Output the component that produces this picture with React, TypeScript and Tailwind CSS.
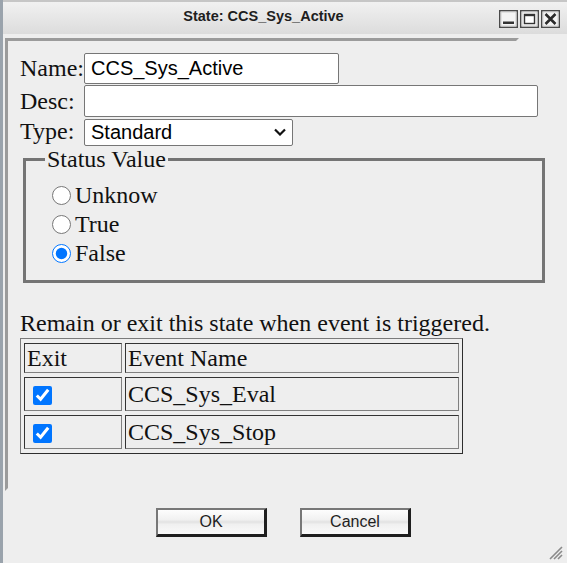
import React from 'react';

const TitleButton = ({ kind }: { kind: 'min' | 'max' | 'close' }) => (
    <svg width="19" height="18" viewBox="0 0 19 18">
        <rect x="0.75" y="0.75" width="17.5" height="16.5" fill="#f4f4f4" stroke="#4a4a4a" strokeWidth="1.5" />
        <rect x="2" y="2" width="15" height="14" fill="none" stroke="#cfcfcf" strokeWidth="1" />
        {kind === 'min' && <rect x="4" y="11.5" width="11" height="2.5" fill="#333" />}
        {kind === 'max' && (
            <>
                <rect x="4.5" y="4.5" width="10" height="9" fill="#fff" stroke="#333" strokeWidth="1.4" />
                <rect x="4" y="4" width="11" height="2.2" fill="#333" />
            </>
        )}
        {kind === 'close' && (
            <path d="M4.5 4 L14.5 14 M14.5 4 L4.5 14" stroke="#2b2b2b" strokeWidth="2.6" />
        )}
    </svg>
);

const cell =
    "border border-t-[#333333] border-l-[#333333] border-r-[#808080] border-b-[#808080] px-[2px] py-0 text-left font-normal";

export default function App() {
    return (
        <div className="flex h-[563px] w-[567px] bg-[#eeeeee] text-[#111]">
            <div className="w-[3px] shrink-0 bg-[#9aa3ac]" />
            <div className="relative flex flex-1 flex-col">
                {/* title bar */}
                <div className="flex h-[34px] shrink-0 border-t-2 border-[#c6c6c6] bg-linear-to-b from-[#f1f1f1] to-[#dcdcdc]">
                    <div className="flex flex-1 justify-center pl-[25px] pt-[6px] font-['Liberation_Sans',sans-serif] text-[14.5px] leading-[17px] font-bold text-[#1e1e1e]">
                        State: CCS_Sys_Active
                    </div>
                    <div className="flex gap-[2px] pt-[8px] pr-[7px]">
                        <TitleButton kind="min" />
                        <TitleButton kind="max" />
                        <TitleButton kind="close" />
                    </div>
                </div>

                {/* main panel */}
                <div className="ml-[2px] mt-[4px] h-[453px] w-[514px] border-[3px] border-t-[#9b9b9b] border-l-[#9b9b9b] border-r-[#eeeeee] border-b-[#eeeeee] pl-[12px] pt-[12px] font-['Liberation_Serif',serif] text-[24px] leading-[27px]">
                    <div className="flex h-[31px] items-center">
                        <span className="w-[64px] shrink-0">Name:</span>
                        <input
                            className="h-[31px] w-[255px] shrink-0 rounded-[2px] border border-[#767676] bg-white pl-[6px] font-['Liberation_Sans',sans-serif] text-[20px] leading-[23px] text-black outline-none"
                            defaultValue="CCS_Sys_Active"
                        />
                    </div>
                    <div className="mt-[1px] flex h-[32px] items-center">
                        <span className="w-[64px] shrink-0">Desc:</span>
                        <input className="h-[32px] w-[454px] shrink-0 rounded-[2px] border border-[#767676] bg-white pl-[6px] font-['Liberation_Sans',sans-serif] text-[20px] leading-[23px] outline-none" />
                    </div>
                    <div className="mt-[1px] flex h-[27px] items-center">
                        <span className="w-[64px] shrink-0">Type:</span>
                        <div className="relative shrink-0">
                            <select
                                className="h-[27px] w-[209px] appearance-none rounded-[2px] border border-[#767676] bg-white pl-[6px] font-['Liberation_Sans',sans-serif] text-[20px] leading-[23px] text-black outline-none"
                                defaultValue="Standard"
                            >
                                <option>Standard</option>
                            </select>
                            <svg className="pointer-events-none absolute left-[190px] top-[10px]" width="12" height="8" viewBox="0 0 12 8">
                                <polyline points="1,1.5 6,6.5 11,1.5" fill="none" stroke="#111" strokeWidth="2.2" />
                            </svg>
                        </div>
                    </div>

                    <fieldset className="ml-[3px] mt-[1px] w-[522px] border-[3px] border-[#747474] p-0">
                        <legend className="ml-[19px] px-[2px] leading-[26px]">Status Value</legend>
                        <div className="pb-[12px] pl-[26px] pt-[9px]">
                            {['Unknow', 'True', 'False'].map((v) => (
                                <label key={v} className="flex h-[29px] items-center gap-[4px]">
                                    <input
                                        type="radio"
                                        name="status"
                                        defaultChecked={v === 'False'}
                                        className="m-0 h-[19px] w-[19px] accent-[#0075ff]"
                                    />
                                    <span>{v}</span>
                                </label>
                            ))}
                        </div>
                    </fieldset>

                    <p className="mt-[27px]">Remain or exit this state when event is triggered.</p>
                    <table className="mt-[1px] w-[443px] table-fixed border border-separate border-t-[#7a7a7a] border-l-[#7a7a7a] border-r-[#2e2e2e] border-b-[#2e2e2e] [border-spacing:3px_4px]">
                        <thead>
                            <tr className="h-[30px]">
                                <th className={`${cell} w-[98px]`}>Exit</th>
                                <th className={cell}>Event Name</th>
                            </tr>
                        </thead>
                        <tbody>
                            {['CCS_Sys_Eval', 'CCS_Sys_Stop'].map((ev) => (
                                <tr key={ev} className="h-[34px]">
                                    <td className={cell}>
                                        <input
                                            type="checkbox"
                                            defaultChecked
                                            className="m-0 ml-[6px] h-[19px] w-[19px] align-middle accent-[#0075ff]"
                                        />
                                    </td>
                                    <td className={cell}>{ev}</td>
                                </tr>
                            ))}
                        </tbody>
                    </table>
                </div>

                {/* buttons */}
                <div className="mt-[17px] flex justify-center gap-[33px] pr-[3px] font-['Liberation_Sans',sans-serif] text-[16px] leading-[18px] text-[#1e1e1e]">
                    <button className="h-[29px] w-[111px] border-t-2 border-l-2 border-r-[3px] border-b-[3px] border-t-[#777] border-l-[#777] border-r-[#1f1f1f] border-b-[#1f1f1f] bg-[linear-gradient(to_bottom,#fdfdfd_0%,#f1f1f1_40%,#e2e2e2_50%,#f0f0f0_60%,#fafafa_100%)]">
                        OK
                    </button>
                    <button className="h-[29px] w-[111px] border-t-2 border-l-2 border-r-[3px] border-b-[3px] border-t-[#777] border-l-[#777] border-r-[#1f1f1f] border-b-[#1f1f1f] bg-[linear-gradient(to_bottom,#fdfdfd_0%,#f1f1f1_40%,#e2e2e2_50%,#f0f0f0_60%,#fafafa_100%)]">
                        Cancel
                    </button>
                </div>

                {/* resize grip */}
                <svg className="absolute bottom-[3px] right-[4px]" width="16" height="16" viewBox="0 0 16 16">
                    <path d="M15 3 L3 15 M15 7 L7 15 M15 11 L11 15" stroke="#8a8a8a" strokeWidth="1.6" />
                </svg>
            </div>
        </div>
    );
}
